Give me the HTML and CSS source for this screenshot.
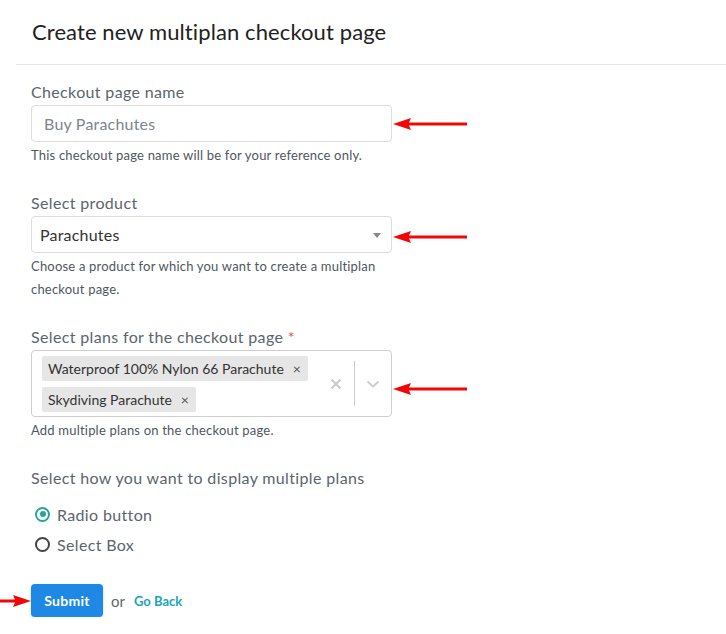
FILE: index.html
```html
<!DOCTYPE html>
<html>
<head>
<meta charset="utf-8">
<link rel="stylesheet" href="styles.css">
</head>
<body>
<div class="page">
  <div class="header">
    <h1 class="title">Create new multiplan checkout page</h1>
  </div>
  <form class="form">
    <div class="group">
      <label class="label">Checkout page name</label>
      <div class="row">
        <div class="input"><span class="placeholder">Buy Parachutes</span></div>
        <svg class="arrow" width="76" height="14" viewBox="0 0 76 14"><path d="M0 7 L18 1 L16 5.5 L74 5.5 L74 8.5 L16 8.5 L18 13 Z" fill="#f00808"/></svg>
      </div>
      <div class="help">This checkout page name will be for your reference only.</div>
    </div>

    <div class="group">
      <label class="label">Select product</label>
      <div class="row">
        <div class="input select"><span class="value">Parachutes</span><span class="caret"></span></div>
        <svg class="arrow arrow-low" width="76" height="14" viewBox="0 0 76 14"><path d="M0 7 L18 1 L16 5.5 L74 5.5 L74 8.5 L16 8.5 L18 13 Z" fill="#f00808"/></svg>
      </div>
      <div class="help">Choose a product for which you want to create a multiplan checkout page.</div>
    </div>

    <div class="group">
      <label class="label">Select plans for the checkout page <span class="req">*</span></label>
      <div class="row">
        <div class="multi">
          <div class="tags">
            <span class="tag">Waterproof 100% Nylon 66 Parachute<span class="tag-x">×</span></span>
            <span class="tag">Skydiving Parachute<span class="tag-x">×</span></span>
          </div>
          <div class="indicators">
            <svg class="clear" width="12" height="12" viewBox="0 0 12 12"><path d="M1.5 1.5 L10.5 10.5 M10.5 1.5 L1.5 10.5" stroke="#cccccc" stroke-width="2.2"/></svg>
            <span class="sep"></span>
            <svg class="chev" width="14" height="8" viewBox="0 0 14 8"><path d="M1.5 1.5 L7 6.5 L12.5 1.5" stroke="#cccccc" stroke-width="1.8" fill="none"/></svg>
          </div>
        </div>
        <svg class="arrow arrow-multi" width="76" height="14" viewBox="0 0 76 14"><path d="M0 7 L18 1 L16 5.5 L74 5.5 L74 8.5 L16 8.5 L18 13 Z" fill="#f00808"/></svg>
      </div>
      <div class="help">Add multiple plans on the checkout page.</div>
    </div>

    <div class="group last">
      <label class="label">Select how you want to display multiple plans</label>
      <div class="radios">
        <div class="radio-row"><span class="radio checked"></span><span class="radio-text">Radio button</span></div>
        <div class="radio-row"><span class="radio"></span><span class="radio-text">Select Box</span></div>
      </div>
    </div>

    <div class="actions">
      <svg class="arrow-left" width="32" height="14" viewBox="0 0 32 14"><path d="M31 7 L13 1 L15 5.5 L0 5.5 L0 8.5 L15 8.5 L13 13 Z" fill="#f00808"/></svg>
      <button type="button" class="btn">Submit</button>
      <span class="or">or</span>
      <a class="back">Go Back</a>
    </div>
  </form>
</div>
</body>
</html>
```

FILE: styles.css
```css
* { box-sizing: border-box; }
html, body { margin: 0; padding: 0; background: #fff; }
body { font-family: Lato, "Open Sans", sans-serif; color: #333; }

.page { padding-left: 16px; }

.header {
  height: 65px;
  border-bottom: 1px solid #e6e6e6;
  padding: 18px 0 0 16px;
}
.title {
  margin: 0;
  font-size: 22px;
  line-height: 28px;
  font-weight: 400;
  color: #222;
  letter-spacing: 0.1px;
}

.form { padding: 16px 0 0 15px; }

.group { margin-bottom: 25px; }
.group.last { margin-bottom: 25px; }

.label {
  display: block;
  font-size: 16px;
  line-height: 21px;
  color: #5b656d;
  margin-bottom: 3px;
  letter-spacing: 0.35px;
}
.req { color: #d9534f; }

.row { display: flex; align-items: center; }
.arrow { margin-left: 1px; flex: none; }
.arrow-low { margin-top: 4px; }
.arrow-multi { margin-top: 10px; }

.input {
  width: 361px;
  height: 37px;
  border: 1px solid #dcdcdc;
  border-radius: 4px;
  display: flex;
  align-items: center;
  padding: 0 12px;
  font-size: 16px;
  letter-spacing: 0.2px;
}
.placeholder { color: #7b868d; }
.select { padding-left: 8px; padding-right: 10px; justify-content: space-between; }
.value { color: #333; }
.caret {
  width: 0; height: 0;
  border-left: 4px solid transparent;
  border-right: 4px solid transparent;
  border-top: 5px solid #888;
  margin-top: 1px;
}

.help {
  margin-top: 2px;
  width: 361px;
  font-size: 13px;
  line-height: 23px;
  color: #4e585f;
  letter-spacing: 0.2px;
}

.multi {
  width: 361px;
  height: 67px;
  border: 1px solid #cfcfcf;
  border-radius: 4px;
  display: flex;
  align-items: center;
}
.tags {
  flex: 1;
  display: flex;
  flex-direction: column;
  align-items: flex-start;
  gap: 6px;
  padding-left: 10px;
}
.tag {
  display: inline-flex;
  align-items: center;
  height: 25px;
  background: #e6e6e6;
  border-radius: 2px;
  padding: 0 7px 0 6px;
  font-size: 14px;
  color: #333;
}
.tag-x { margin-left: 9px; font-size: 14px; color: #555; }
.indicators {
  display: flex;
  align-items: center;
  height: 100%;
  padding: 10px 0;
}
.clear { margin-right: 12px; }
.sep { width: 1px; align-self: stretch; background: #cccccc; }
.chev { margin: 0 11px 0 11px; }

.radios { margin-top: 11px; }
.radio-row {
  display: flex;
  align-items: center;
  height: 30px;
  padding-left: 4px;
}
.radio {
  width: 15px; height: 15px;
  border-radius: 50%;
  border: 2px solid #444;
  margin-right: 7px;
  position: relative;
  flex: none;
}
.radio.checked { border-color: #26a69a; }
.radio.checked::after {
  content: "";
  position: absolute;
  left: 2.5px; top: 2.5px;
  width: 6px; height: 6px;
  border-radius: 50%;
  background: #26a69a;
}
.radio-text { font-size: 16px; color: #5b656d; letter-spacing: 0.35px; }

.actions {
  display: flex;
  align-items: center;
  position: relative;
}
.arrow-left { position: absolute; left: -31px; top: 10px; }
.btn {
  width: 72px;
  height: 33px;
  border: none;
  border-radius: 4px;
  background: #1e88e5;
  color: #fff;
  font-family: Lato, sans-serif;
  font-weight: 700;
  font-size: 14px;
  letter-spacing: 0.3px;
  box-shadow: 0 1px 3px rgba(0,0,0,0.2);
  padding: 0;
}
.or { margin-left: 8px; font-size: 15px; color: #666; }
.back { margin-left: 9px; font-size: 13px; font-weight: 700; color: #1aa6b7; }
```
